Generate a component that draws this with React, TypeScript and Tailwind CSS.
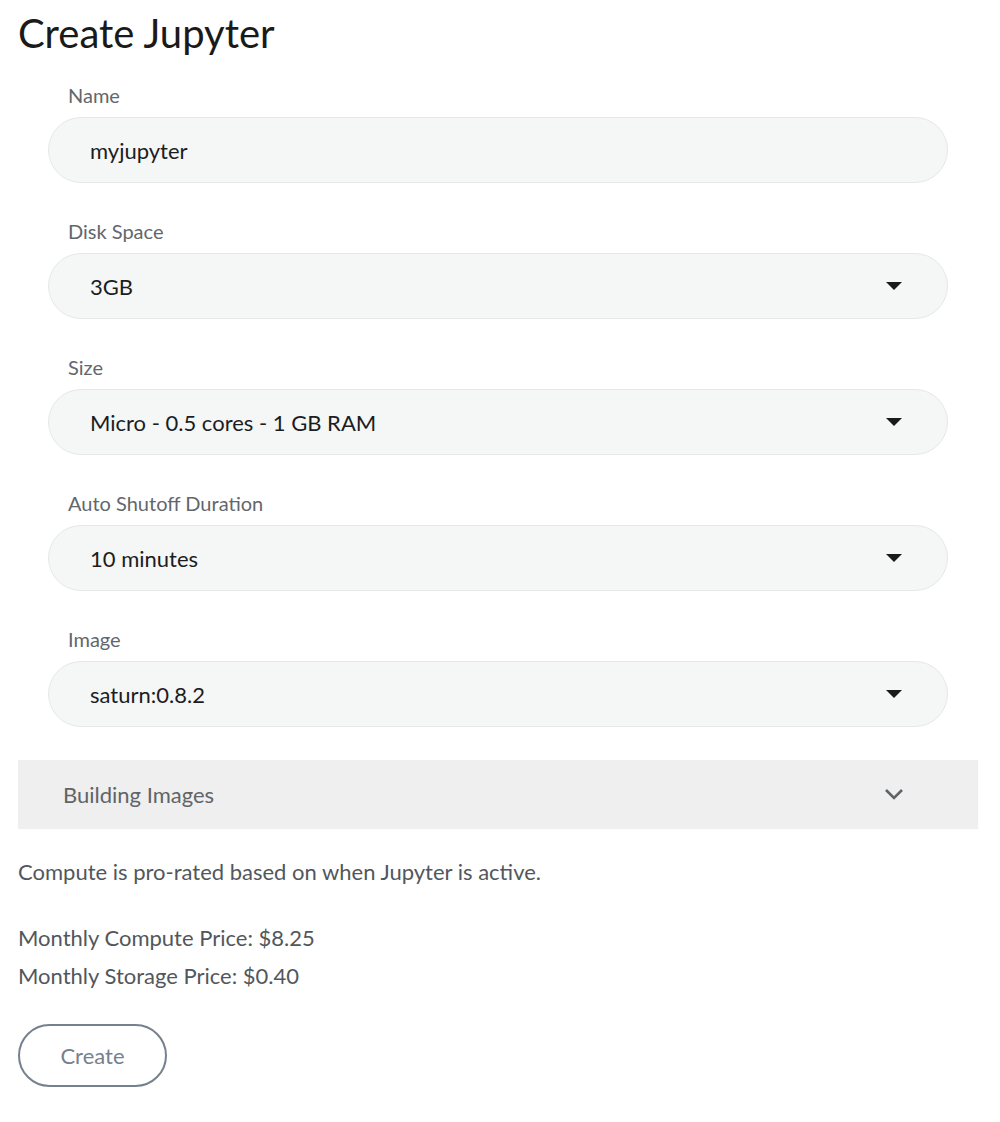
import React from 'react';

const fieldBox =
  'mx-[30px] h-[66px] rounded-full border border-[#e6e8e8] bg-[#f5f6f6] flex items-center pl-[41px] pr-[44px] text-[22px] text-[#1b1d1f]';

const Caret = () => (
  <svg width="18" height="10" viewBox="0 0 18 10" className="ml-auto">
    <path d="M1 1h16l-8 8z" fill="#1a1a1a" />
  </svg>
);

const Field = ({ label, value, select }: { label: string; value: string; select?: boolean }) => (
  <div className="flex flex-col">
    <div className="pl-[50px] text-[20px] leading-[24px] text-[#62676c] mb-[10px]">{label}</div>
    <div className={fieldBox}>
      <span>{value}</span>
      {select && <Caret />}
    </div>
  </div>
);

export default function App() {
  return (
    <div className="bg-white min-h-[1122px] pl-[18px] w-[978px]" style={{ fontFamily: 'Lato, "Open Sans", sans-serif' }}>
      <h1 className="pt-[9px] text-[40px] leading-[48px] text-[#1a1a1a]">Create Jupyter</h1>
      <div className="mt-[26px] flex flex-col gap-[36px]">
        <Field label="Name" value="myjupyter" />
        <Field label="Disk Space" value="3GB" select />
        <Field label="Size" value="Micro - 0.5 cores - 1 GB RAM" select />
        <Field label="Auto Shutoff Duration" value="10 minutes" select />
        <Field label="Image" value="saturn:0.8.2" select />
      </div>
      <div className="mt-[33px] h-[68px] bg-[#efefef] flex items-center pl-[45px] pr-[74px] text-[22px] text-[#5f6469] shadow-[0_1px_1px_rgba(0,0,0,0.06)]">
        <span>Building Images</span>
        <svg width="20" height="12" viewBox="0 0 20 12" className="ml-auto">
          <path d="M2 2l8 8 8-8" fill="none" stroke="#5f6469" strokeWidth="2.6" />
        </svg>
      </div>
      <p className="mt-[30px] text-[22px] leading-[28px] text-[#52575c]">Compute is pro-rated based on when Jupyter is active.</p>
      <div className="mt-[33px] text-[22px] leading-[38px] text-[#52575c]">
        <div>Monthly Compute Price: $8.25</div>
        <div>Monthly Storage Price: $0.40</div>
      </div>
      <button className="mt-[29px] w-[149px] h-[63px] rounded-full border-2 border-[#75818e] text-[22px] text-[#75818e] bg-white">
        Create
      </button>
    </div>
  );
}
